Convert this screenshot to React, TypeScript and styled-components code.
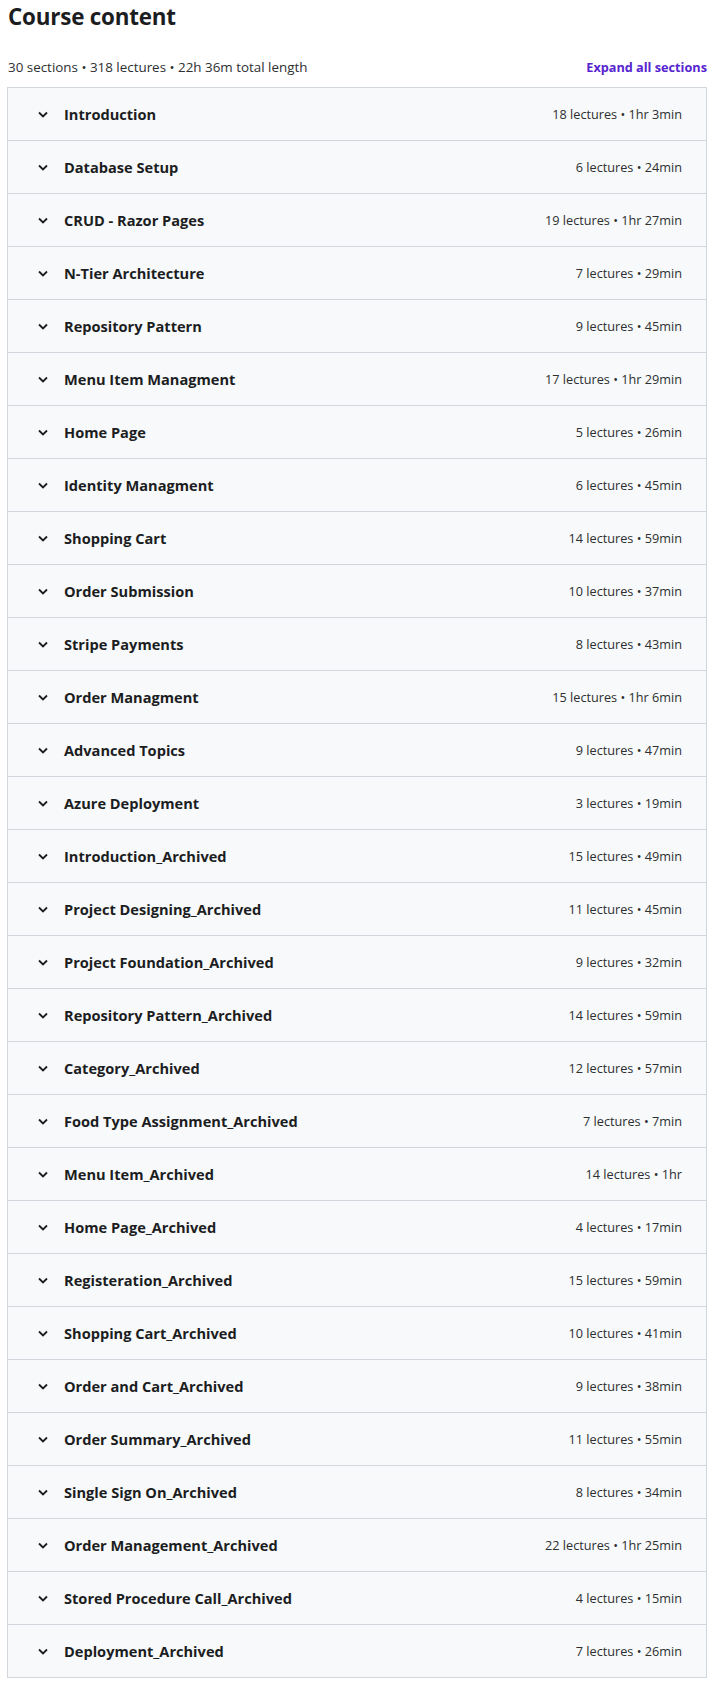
import React from "react";
import styled, { createGlobalStyle } from "styled-components";

const GlobalStyle = createGlobalStyle`
  * { box-sizing: border-box; }
  body {
    margin: 0;
    background: #ffffff;
    font-family: "Open Sans", "Noto Sans", sans-serif;
    color: #2d2f31;
  }
`;

const Page = styled.div`
  padding: 0 6px 0 7px;
  width: 713px;
`;

const Title = styled.h2`
  margin: 0;
  padding: 1px 0 0 1px;
  font-size: 22.4px;
  line-height: 32px;
  font-weight: 700;
  color: #1c1d1f;
  letter-spacing: -0.2px;
`;

const Summary = styled.div`
  display: flex;
  justify-content: space-between;
  align-items: center;
  margin-top: 20px;
  height: 28px;
`;

const Stats = styled.span`
  font-size: 13.4px;
  color: #2d2f31;
  padding-left: 1px;
`;

const ExpandLink = styled.button`
  border: none;
  background: none;
  padding: 0;
  font-family: inherit;
  font-size: 12.7px;
  font-weight: 700;
  color: #5624d0;
  cursor: pointer;
`;

const SectionList = styled.div`
  margin-top: 6px;
  border: 1px solid #d1d7dc;
  border-bottom: none;
`;

const Row = styled.div`
  display: flex;
  align-items: center;
  height: 53px;
  padding: 0 24px 0 29px;
  background: #f7f9fa;
  border-bottom: 1px solid #d1d7dc;
`;

const Chevron = styled.svg`
  width: 12px;
  height: 12px;
  flex: none;
  margin-right: 15px;
`;

const SectionTitle = styled.span`
  flex: 1;
  font-size: 14.6px;
  font-weight: 700;
  color: #1c1d1f;
`;

const Meta = styled.span`
  font-size: 12.7px;
  color: #2d2f31;
`;

const sections: [string, string][] = [
  ["Introduction", "18 lectures • 1hr 3min"],
  ["Database Setup", "6 lectures • 24min"],
  ["CRUD - Razor Pages", "19 lectures • 1hr 27min"],
  ["N-Tier Architecture", "7 lectures • 29min"],
  ["Repository Pattern", "9 lectures • 45min"],
  ["Menu Item Managment", "17 lectures • 1hr 29min"],
  ["Home Page", "5 lectures • 26min"],
  ["Identity Managment", "6 lectures • 45min"],
  ["Shopping Cart", "14 lectures • 59min"],
  ["Order Submission", "10 lectures • 37min"],
  ["Stripe Payments", "8 lectures • 43min"],
  ["Order Managment", "15 lectures • 1hr 6min"],
  ["Advanced Topics", "9 lectures • 47min"],
  ["Azure Deployment", "3 lectures • 19min"],
  ["Introduction_Archived", "15 lectures • 49min"],
  ["Project Designing_Archived", "11 lectures • 45min"],
  ["Project Foundation_Archived", "9 lectures • 32min"],
  ["Repository Pattern_Archived", "14 lectures • 59min"],
  ["Category_Archived", "12 lectures • 57min"],
  ["Food Type Assignment_Archived", "7 lectures • 7min"],
  ["Menu Item_Archived", "14 lectures • 1hr"],
  ["Home Page_Archived", "4 lectures • 17min"],
  ["Registeration_Archived", "15 lectures • 59min"],
  ["Shopping Cart_Archived", "10 lectures • 41min"],
  ["Order and Cart_Archived", "9 lectures • 38min"],
  ["Order Summary_Archived", "11 lectures • 55min"],
  ["Single Sign On_Archived", "8 lectures • 34min"],
  ["Order Management_Archived", "22 lectures • 1hr 25min"],
  ["Stored Procedure Call_Archived", "4 lectures • 15min"],
  ["Deployment_Archived", "7 lectures • 26min"],
];

export default function App() {
  return (
    <Page>
      <GlobalStyle />
      <Title>Course content</Title>
      <Summary>
        <Stats>30 sections • 318 lectures • 22h 36m total length</Stats>
        <ExpandLink>Expand all sections</ExpandLink>
      </Summary>
      <SectionList>
        {sections.map(([name, meta]) => (
          <Row key={name}>
            <Chevron viewBox="0 0 12 12">
              <path d="M2 4.5 L6 8.5 L10 4.5" fill="none" stroke="#1c1d1f" strokeWidth="1.8" />
            </Chevron>
            <SectionTitle>{name}</SectionTitle>
            <Meta>{meta}</Meta>
          </Row>
        ))}
      </SectionList>
    </Page>
  );
}
